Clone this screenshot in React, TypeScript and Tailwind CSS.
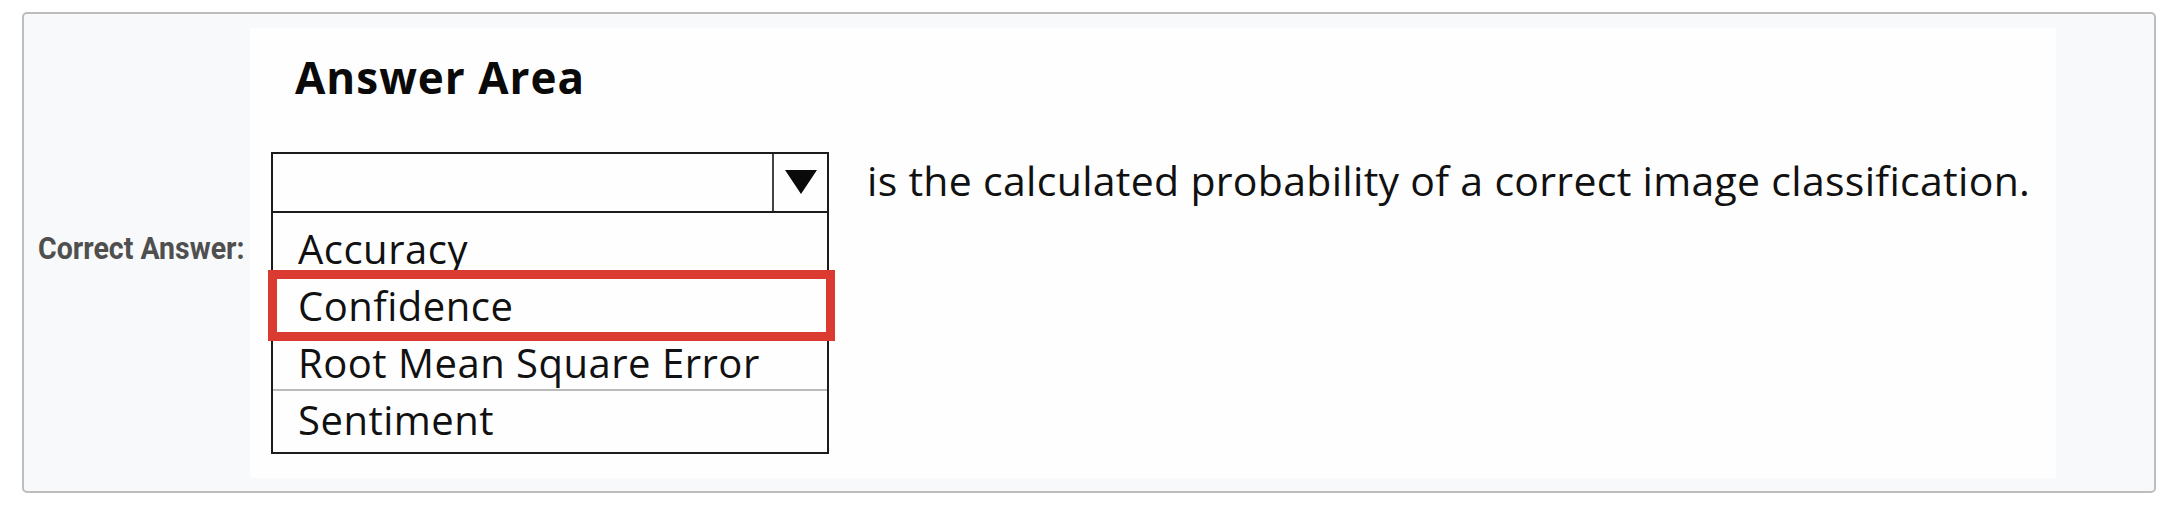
export default function App() {
  const items = ["Accuracy", "Confidence", "Root Mean Square Error", "Sentiment"];
  return (
    <div className="w-[2184px] h-[514px] bg-white pt-[12px] pl-[22px] pr-[28px]">
      <div className="h-[481px] rounded-[5px] border-2 border-[#bdbdbd] bg-[#f8f9fa] flex items-center py-[13px]">
        <div className="w-[226px] pl-[14px] pb-[7px] self-stretch flex items-center">
          <span
            className="inline-block origin-left scale-x-[0.92] scale-y-100 text-[31px] leading-[36px] font-bold text-[#4f4f4f] whitespace-nowrap"
            style={{ fontFamily: "Roboto, 'Liberation Sans', sans-serif" }}
          >
            Correct Answer:
          </span>
        </div>
        <div
          className="w-[1806px] h-[450px] bg-[#fefefe] text-[#111]"
          style={{ fontFamily: "'Open Sans', Lato, sans-serif" }}
        >
          <div className="pl-[45px] pt-[25px] text-[44px] tracking-[1px] font-bold leading-[48px] text-[#0a0a0a]">
            Answer Area
          </div>
          <div className="flex items-start mt-[51px] pl-[21px]">
            <div className="relative w-[558px] border-2 border-[#1c1c1c]">
              <div className="flex h-[59px] border-b-2 border-[#1c1c1c]">
                <div className="flex-1" />
                <div className="w-[55px] border-l-2 border-[#444] flex items-center justify-center">
                  <svg width="32" height="24" viewBox="0 0 32 24">
                    <polygon points="0,0 32,0 16,24" fill="#0a0a0a" />
                  </svg>
                </div>
              </div>
              <div className="pt-[7px] pb-[4px]">
                {items.map((t, i) => (
                  <div
                    key={t}
                    className={
                      "h-[57px] pl-[25px] text-[40px] tracking-[0.5px] leading-[57px] whitespace-nowrap " +
                      (i === 2 ? "border-b-2 border-[#bbbbbb]" : "")
                    }
                  >
                    {t}
                  </div>
                ))}
              </div>
              <div className="absolute left-[-5px] top-[116px] w-[567px] h-[71px] border-[9px] border-[#da3a2f]" />
            </div>
            <div className="ml-[38px] pt-[4px] text-[41px] tracking-[0.3px] leading-[48px] whitespace-nowrap">
              is the calculated probability of a correct image classification.
            </div>
          </div>
        </div>
      </div>
    </div>
  );
}
